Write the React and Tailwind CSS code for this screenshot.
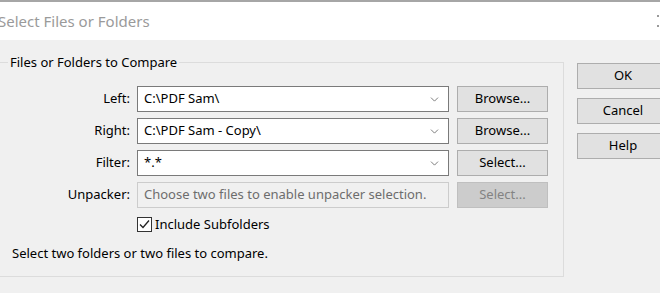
import { ChevronDown } from "lucide-react";

const font = { fontFamily: '"Noto Sans", "Open Sans", sans-serif' };

function Combo({ value }) {
    return (
        <div className="flex h-[26px] w-[312px] shrink-0 items-center justify-between border border-[#7a7a7a] bg-white pl-[6px] pr-[7px]">
            <span className="text-[13px] text-black">{value}</span>
            <ChevronDown className="h-[13px] w-[13px] text-[#606060]" strokeWidth={1.5} />
        </div>
    );
}

function Btn({ children, disabled }) {
    return (
        <div
            className={
                disabled
                    ? "flex h-[26px] w-[91px] shrink-0 items-center justify-center border border-[#bfbfbf] bg-[#cccccc] text-[13px] text-[#838383]"
                    : "flex h-[26px] w-[91px] shrink-0 items-center justify-center border border-[#adadad] bg-[#e1e1e1] text-[13px] text-black"
            }
        >
            {children}
        </div>
    );
}

function Row({ label, children, button, disabled }) {
    return (
        <div className="flex h-[26px] items-center">
            <div className="w-[138px] shrink-0 pr-[7px] text-right text-[13px] text-black">{label}</div>
            {children}
            <div className="ml-[8px] shrink-0">
                <Btn disabled={disabled}>{button}</Btn>
            </div>
        </div>
    );
}

export default function App() {
    return (
        <div className="h-[293px] w-[660px] overflow-hidden bg-[#f0f0f0]" style={font}>
            <div className="h-[2px] bg-[#a6a6a6]" />
            <div className="flex h-[38px] items-center justify-between bg-white">
                <span className="-ml-[2px] text-[15px] text-[#9a9a9a]">Select Files or Folders</span>
                <div className="mr-[1px] flex flex-col gap-[8px]">
                    <span className="block h-[2px] w-[2px] bg-[#9a9a9a]" />
                    <span className="block h-[2px] w-[2px] bg-[#9a9a9a]" />
                </div>
            </div>
            <div className="flex pt-[22px]">
                <div className="relative -ml-[2px] h-[215px] w-[566px] shrink-0 border border-[#dcdcdc]">
                    <span className="absolute -top-[10px] left-[9px] bg-[#f0f0f0] px-[2px] text-[13px] text-black">
                        Files or Folders to Compare
                    </span>
                    <div className="flex flex-col gap-[6px] pt-[23px]">
                        <Row label="Left:" button="Browse...">
                            <Combo value="C:\PDF Sam\" />
                        </Row>
                        <Row label="Right:" button="Browse...">
                            <Combo value="C:\PDF Sam - Copy\" />
                        </Row>
                        <Row label="Filter:" button="Select...">
                            <Combo value="*.*" />
                        </Row>
                        <Row label="Unpacker:" button="Select..." disabled>
                            <div className="flex h-[26px] w-[312px] shrink-0 items-center border border-[#cccccc] bg-[#f0f0f0] pl-[6px] text-[13px] text-[#6d6d6d]">
                                Choose two files to enable unpacker selection.
                            </div>
                        </Row>
                    </div>
                    <div className="ml-[138px] mt-[7px] flex items-center gap-[3px]">
                        <div className="flex h-[15px] w-[15px] items-center justify-center border border-[#333333] bg-white">
                            <svg width="11" height="11" viewBox="0 0 11 11">
                                <path d="M1 5.5 L4 8.5 L10 1.5" fill="none" stroke="#222" strokeWidth="1.3" />
                            </svg>
                        </div>
                        <span className="text-[13px] text-black">Include Subfolders</span>
                    </div>
                    <div className="ml-[13px] mt-[9px] text-[13px] text-black">
                        Select two folders or two files to compare.
                    </div>
                </div>
                <div className="ml-[13px] flex shrink-0 flex-col gap-[9px] pt-[1px]">
                    <div className="flex h-[26px] w-[92px] items-center justify-center border border-[#adadad] bg-[#e1e1e1] text-[13px] text-black">OK</div>
                    <div className="flex h-[26px] w-[92px] items-center justify-center border border-[#adadad] bg-[#e1e1e1] text-[13px] text-black">Cancel</div>
                    <div className="flex h-[26px] w-[92px] items-center justify-center border border-[#adadad] bg-[#e1e1e1] text-[13px] text-black">Help</div>
                </div>
            </div>
        </div>
    );
}
